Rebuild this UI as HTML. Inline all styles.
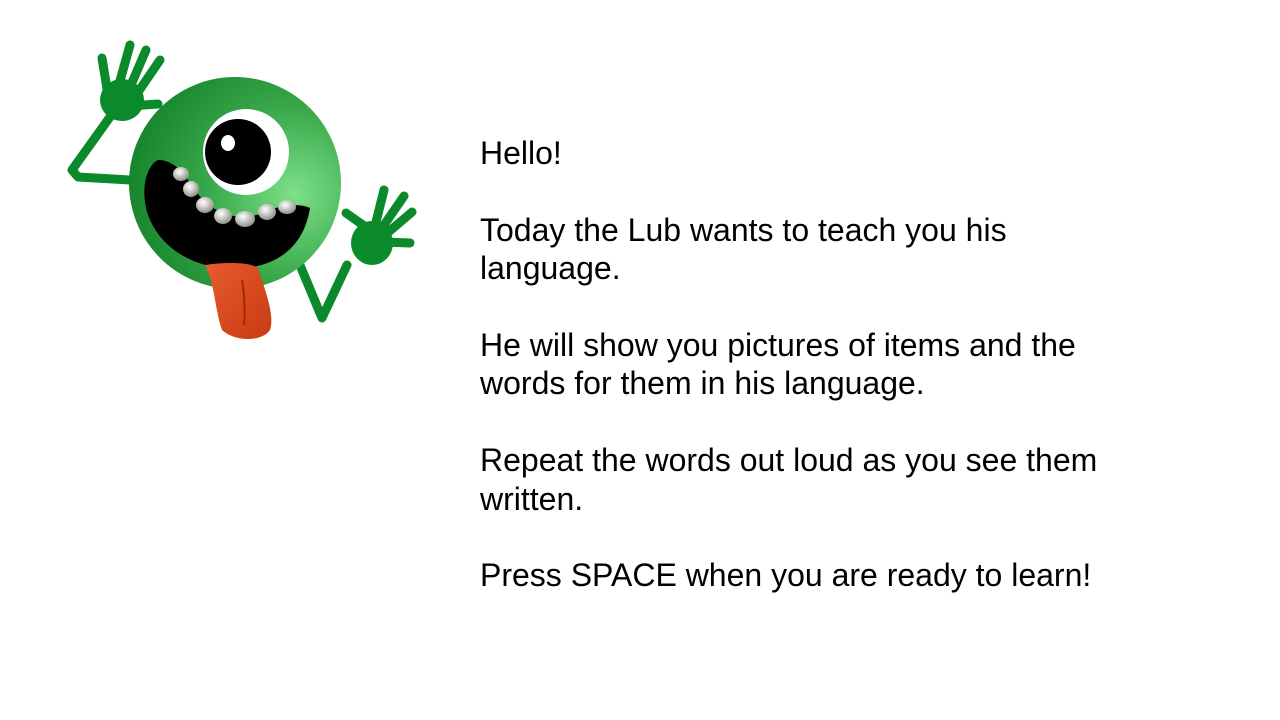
<!DOCTYPE html>
<html><head><meta charset="utf-8"><style>
html,body{margin:0;padding:0;background:#fff;width:1280px;height:720px;overflow:hidden}
.t{position:absolute;left:480px;top:134px;font-family:"Liberation Sans",Arial,sans-serif;font-size:32px;line-height:38.4px;color:#000;white-space:nowrap}
.t div{height:38.4px}
svg{position:absolute;left:0;top:0}
</style></head><body>
<svg width="460" height="360" viewBox="0 0 460 360">
<defs>
<radialGradient id="hg" cx="0.78" cy="0.55" r="0.9">
<stop offset="0" stop-color="#7ee08a"/><stop offset="0.45" stop-color="#38a84a"/><stop offset="1" stop-color="#0c7a22"/>
</radialGradient>
<linearGradient id="tg" x1="0" y1="0" x2="1" y2="1"><stop offset="0" stop-color="#e85a30"/><stop offset="1" stop-color="#c83a10"/></linearGradient>
<radialGradient id="th" cx="0.4" cy="0.35" r="0.7"><stop offset="0" stop-color="#fff"/><stop offset="1" stop-color="#8a8a80"/></radialGradient>
</defs>
<g fill="none" stroke="#0a8a2a" stroke-linecap="round" stroke-linejoin="round">
<path d="M130 180 L78 177 L72 170 L115 110" stroke-width="9"/>
<path d="M297 258 L322 318 L347 265" stroke-width="9"/>
<path d="M108 95 L102 58" stroke-width="9"/>
<path d="M118 88 L130 45" stroke-width="9"/>
<path d="M128 92 L146 50" stroke-width="9"/>
<path d="M134 98 L160 60" stroke-width="9"/>
<path d="M130 106 L158 104" stroke-width="9"/>
<path d="M370 230 L346 213" stroke-width="9"/>
<path d="M375 226 L384 190" stroke-width="9"/>
<path d="M382 228 L404 196" stroke-width="9"/>
<path d="M385 235 L412 212" stroke-width="9"/>
<path d="M382 242 L410 243" stroke-width="9"/>
</g>
<ellipse cx="122" cy="100" rx="22" ry="21" fill="#0a8a2a"/>
<ellipse cx="372" cy="243" rx="21" ry="22" fill="#0a8a2a"/>
<circle cx="235" cy="183" r="106" fill="url(#hg)"/>
<path d="M158 160 C146 166 140 190 148 215 C163 255 205 272 245 268 C285 264 305 240 310 208 C300 203 280 204 260 214 C235 222 210 212 195 190 C185 176 176 160 158 160 Z" fill="#000"/>
<g fill="url(#th)">
<ellipse cx="181" cy="174" rx="8" ry="7"/>
<ellipse cx="191" cy="189" rx="8" ry="8"/>
<ellipse cx="205" cy="205" rx="9" ry="8"/>
<ellipse cx="223" cy="216" rx="9" ry="8"/>
<ellipse cx="245" cy="219" rx="10" ry="8"/>
<ellipse cx="267" cy="212" rx="9" ry="8"/>
<ellipse cx="287" cy="207" rx="9" ry="7"/>
</g>
<path d="M205 265 C225 262 250 262 258 268 C265 290 275 315 270 330 C262 342 235 342 222 330 C215 310 215 285 205 265 Z" fill="url(#tg)"/>
<path d="M242 280 Q246 305 244 325" stroke="#a02a08" stroke-width="2" fill="none"/>
<circle cx="246" cy="152" r="43" fill="#fff"/>
<circle cx="238" cy="152" r="33" fill="#000"/>
<ellipse cx="228" cy="143" rx="7" ry="8" fill="#fff"/>
</svg>
<div class="t">
<div>Hello!</div><div></div>
<div>Today the Lub wants to teach you his</div>
<div>language.</div><div></div>
<div>He will show you pictures of items and the</div>
<div>words for them in his language.</div><div></div>
<div>Repeat the words out loud as you see them</div>
<div>written.</div><div></div>
<div>Press SPACE when you are ready to learn!</div>
</div>
</body></html>
